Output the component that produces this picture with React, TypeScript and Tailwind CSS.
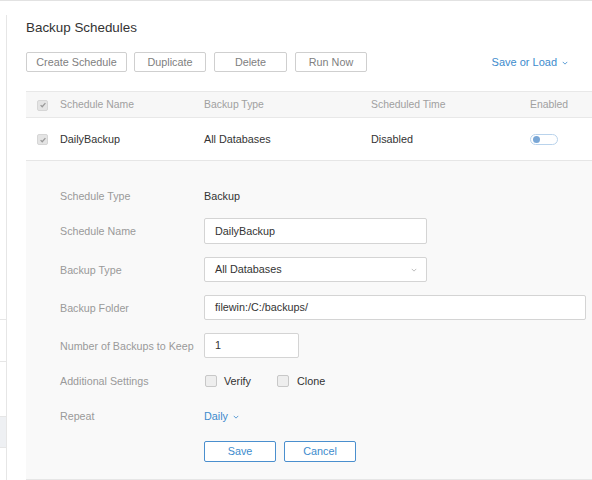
import React from "react";

const font = { fontFamily: '"Liberation Sans", Arial, sans-serif' };

function Chevron({ className = "" }: { className?: string }) {
  return (
    <svg viewBox="0 0 8 5" className={className} fill="none" stroke="currentColor" strokeWidth="1.1">
      <path d="M1 1l3 3 3-3" />
    </svg>
  );
}

function GrayCheck() {
  return (
    <span className="flex h-[11px] w-[11px] items-center justify-center rounded-[2px] bg-[#e4e4e4] border border-[#d6d6d6]">
      <svg viewBox="0 0 10 10" className="h-[8px] w-[8px]" fill="none" stroke="#9a9a9a" strokeWidth="1.6">
        <path d="M2 5.2l2 2 4-4.6" />
      </svg>
    </span>
  );
}

function EmptyCheck() {
  return <span className="inline-block h-[12px] w-[12px] rounded-[2px] border border-[#c8c8c8] bg-[#eeeeee]" />;
}

function FormRow({
  label,
  className,
  children,
}: {
  label: string;
  className: string;
  children: React.ReactNode;
}) {
  return (
    <div className={`flex items-center ${className}`}>
      <div className="w-[144px] whitespace-nowrap pt-[1px] text-[10.7px] text-[#9a9a9a]">{label}</div>
      <div className="flex flex-1 items-center">{children}</div>
    </div>
  );
}

const toolBtn =
  "h-[20px] rounded-[2px] border border-[#cfcfcf] bg-white text-[10.8px] text-[#808080] flex items-center justify-center";

const field =
  "flex items-center rounded-[2px] border border-[#d4d4d4] bg-white pl-[10px] text-[10.8px] text-[#333]";

export default function App() {
  return (
    <div style={font} className="flex h-[480px] w-[592px] overflow-hidden border-t border-[#e2e2e2] bg-white">
      {/* sidebar sliver */}
      <div className="mt-[14px] flex w-[7px] flex-col border-r border-[#e6e6e6]">
        <div className="h-[305px] border-b border-[#e6e6e6]" />
        <div className="h-[42px] border-b border-[#e6e6e6]" />
        <div className="h-[54px]" />
        <div className="h-[32px] border-y border-[#e6e6e6] bg-[#eef0f3]" />
        <div className="flex-1" />
      </div>

      {/* main */}
      <div className="flex flex-1 flex-col pl-[19px]">
        <div className="mt-[18px] h-[18px] text-[13.4px] leading-[18px] text-[#333]">Backup Schedules</div>

        <div className="mt-[15px] flex items-center pr-[24px]">
          <button className={`${toolBtn} w-[101px]`}>Create Schedule</button>
          <button className={`${toolBtn} ml-[7px] w-[72px]`}>Duplicate</button>
          <button className={`${toolBtn} ml-[8px] w-[73px]`}>Delete</button>
          <button className={`${toolBtn} ml-[8px] w-[72px]`}>Run Now</button>
          <div className="ml-auto flex items-center gap-[5px] text-[11px] text-[#3d8bcd]">
            Save or Load
            <Chevron className="mt-[1px] h-[4px] w-[6px]" />
          </div>
        </div>

        {/* table header */}
        <div className="mt-[19px] grid h-[27px] grid-cols-[34px_144px_167px_159px_1fr] items-center border-y border-[#e8e8e8] bg-[#f7f7f7] pt-[1px] text-[10.4px] text-[#a0a0a0]">
          <div className="pl-[11px]">
            <GrayCheck />
          </div>
          <div>Schedule Name</div>
          <div>Backup Type</div>
          <div>Scheduled Time</div>
          <div>Enabled</div>
        </div>

        {/* row */}
        <div className="grid h-[43px] grid-cols-[34px_144px_167px_159px_1fr] items-center border-b border-[#e6e6e6] pt-[1px] text-[10.8px] text-[#333]">
          <div className="pl-[11px]">
            <GrayCheck />
          </div>
          <div>DailyBackup</div>
          <div>All Databases</div>
          <div>Disabled</div>
          <div>
            <span className="flex h-[11px] w-[28px] items-center rounded-full border border-[#b9d3ec] bg-white pl-[2px]">
              <span className="h-[7px] w-[7px] rounded-full bg-[#7aa7d6]" />
            </span>
          </div>
        </div>

        {/* expanded editor */}
        <div className="flex flex-1 flex-col border-b border-[#e6e6e6] bg-[#f9f9f9] pl-[34px] pr-[6px]">
          <FormRow label="Schedule Type" className="mt-[22px] h-[26px]">
            <span className="pt-[1px] text-[10.8px] text-[#333]">Backup</span>
          </FormRow>
          <FormRow label="Schedule Name" className="mt-[9px] h-[26px]">
            <div className={`${field} h-[26px] w-[223px]`}>DailyBackup</div>
          </FormRow>
          <FormRow label="Backup Type" className="mt-[13px] h-[25px]">
            <div className={`${field} h-[25px] w-[223px] justify-between pr-[9px]`}>
              All Databases
              <Chevron className="h-[4px] w-[6px] text-[#b0b0b0]" />
            </div>
          </FormRow>
          <FormRow label="Backup Folder" className="mt-[13px] h-[25px]">
            <div className={`${field} h-[25px] flex-1`}>filewin:/C:/backups/</div>
          </FormRow>
          <FormRow label="Number of Backups to Keep" className="mt-[13px] h-[25px]">
            <div className={`${field} h-[25px] w-[95px]`}>1</div>
          </FormRow>
          <FormRow label="Additional Settings" className="mt-[10px] h-[26px]">
            <div className="flex items-center text-[10.8px] text-[#333]">
              <span className="ml-[1px] flex">
                <EmptyCheck />
              </span>
              <span className="ml-[7px]">Verify</span>
              <span className="ml-[26px] flex">
                <EmptyCheck />
              </span>
              <span className="ml-[8px]">Clone</span>
            </div>
          </FormRow>
          <FormRow label="Repeat" className="mt-[9px] h-[26px]">
            <div className="flex items-center gap-[5px] text-[10.8px] text-[#3d8bcd]">
              Daily
              <Chevron className="mt-[2px] h-[4px] w-[6px]" />
            </div>
          </FormRow>
          <div className="mt-[12px] flex h-[21px] pl-[144px]">
            <button className="flex h-[21px] w-[72px] items-center justify-center rounded-[2px] border border-[#4a8fce] bg-white text-[10.8px] text-[#3d8bcd]">
              Save
            </button>
            <button className="ml-[8px] flex h-[21px] w-[72px] items-center justify-center rounded-[2px] border border-[#4a8fce] bg-white text-[10.8px] text-[#3d8bcd]">
              Cancel
            </button>
          </div>
        </div>
      </div>
    </div>
  );
}
